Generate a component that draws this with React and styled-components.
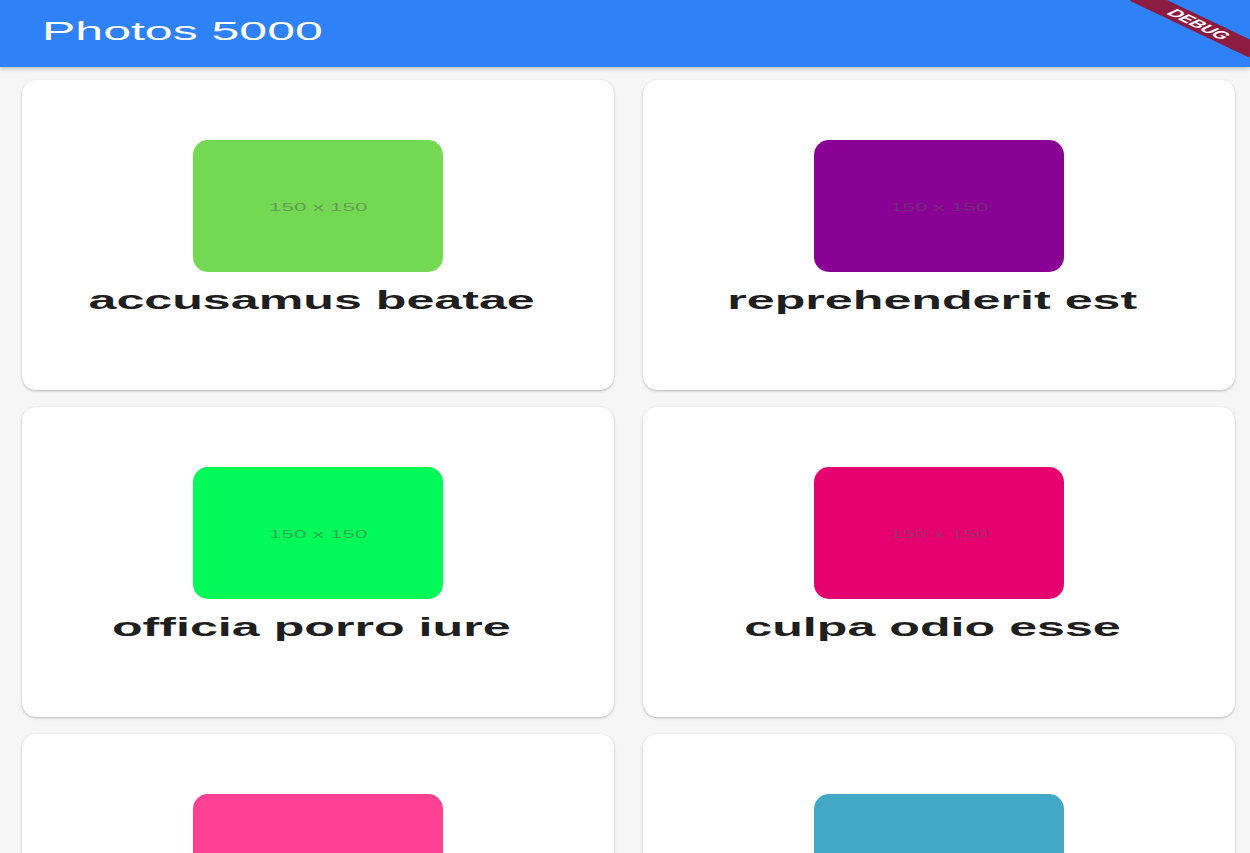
import React from "react";
import styled, { createGlobalStyle } from "styled-components";

const GlobalStyle = createGlobalStyle`
  html, body {
    margin: 0;
    padding: 0;
    height: 100%;
    overflow: hidden;
    background: #f6f6f6;
    font-family: "Liberation Sans", Arial, sans-serif;
  }
`;

const Page = styled.div`
  position: relative;
  width: 1250px;
  height: 853px;
  overflow: hidden;
  background: #f6f6f6;
`;

const AppBar = styled.header`
  position: relative;
  z-index: 2;
  height: 67px;
  display: flex;
  align-items: center;
  padding-left: 42px;
  background: #2e81f6;
  box-shadow: 0 2px 4px rgba(0, 0, 0, 0.22);
`;

const Stretch = styled.span`
  display: inline-block;
  white-space: nowrap;
  transform: scaleX(${(p) => p.$x || 2});
  transform-origin: ${(p) => p.$origin || "center"};
`;

const Title = styled.h1`
  margin: -5px 0 0;
  font-size: 25px;
  font-weight: 400;
  color: #ffffff;
  line-height: 30px;
`;

const BannerCorner = styled.div`
  position: absolute;
  top: 0;
  right: 0;
  width: 60px;
  height: 60px;
  overflow: hidden;
  z-index: 5;
  transform: scaleX(2.1);
  transform-origin: top right;
  pointer-events: none;
`;

const Ribbon = styled.div`
  position: absolute;
  left: 20px;
  top: 28px;
  width: 80px;
  height: 13px;
  background: #8b1b41;
  color: #ffffff;
  font-size: 10.5px;
  font-weight: 900;
  line-height: 13px;
  text-align: center;
  transform-origin: 40px -28px;
  transform: rotate(45deg);
`;

const Grid = styled.main`
  display: grid;
  grid-template-columns: repeat(2, 1fr);
  column-gap: 29px;
  row-gap: 17px;
  padding: 13px 15px 0 22px;
`;

const Card = styled.article`
  height: 310px;
  background: #ffffff;
  border-radius: 14px;
  box-shadow: 0 1px 3px rgba(0, 0, 0, 0.22), 0 1px 1px rgba(0, 0, 0, 0.06);
  display: flex;
  flex-direction: column;
  align-items: center;
`;

const Thumb = styled.div`
  margin-top: 60px;
  width: 250px;
  height: 132px;
  flex-shrink: 0;
  border-radius: 15px;
  background: ${(p) => p.$color};
  display: flex;
  align-items: center;
  justify-content: center;
`;

const ThumbLabel = styled.span`
  font-size: 11.5px;
  color: rgba(90, 90, 90, 0.5);
  margin-top: 2px;
`;

const Caption = styled.h2`
  margin: 13px 0 0;
  padding-right: 13px;
  font-size: 26px;
  font-weight: 700;
  line-height: 30px;
  color: #1f1f1f;
`;

const photos = [
  { title: "accusamus beatae", color: "#74d952" },
  { title: "reprehenderit est", color: "#8a0095" },
  { title: "officia porro iure", color: "#00fa57" },
  { title: "culpa odio esse", color: "#e6006f" },
  { title: "natus nisi omnis", color: "#ff4093" },
  { title: "accusamus ea aliquid", color: "#42a8c6" },
];

const PhotoCard = ({ photo }) => {
  return (
    <Card>
      <Thumb $color={photo.color}>
        <ThumbLabel>
          <Stretch $x={1.95}>150 x 150</Stretch>
        </ThumbLabel>
      </Thumb>
      <Caption>
        <Stretch $x={1.93}>{photo.title}</Stretch>
      </Caption>
    </Card>
  );
};

export default function App() {
  return (
    <Page>
      <GlobalStyle />
      <AppBar>
        <Title>
          <Stretch $x={2} $origin="left">
            Photos 5000
          </Stretch>
        </Title>
      </AppBar>
      <BannerCorner>
        <Ribbon>DEBUG</Ribbon>
      </BannerCorner>
      <Grid>
        {photos.map((photo, index) => (
          <PhotoCard key={index} photo={photo} />
        ))}
      </Grid>
    </Page>
  );
}
